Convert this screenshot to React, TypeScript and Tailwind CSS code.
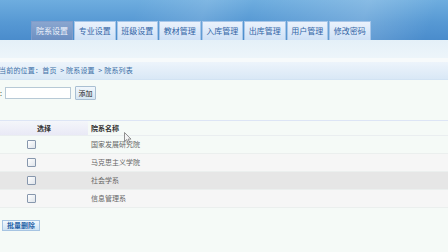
import React from 'react';

const tabs = ['院系设置', '专业设置', '班级设置', '教材管理', '入库管理', '出库管理', '用户管理', '修改密码'];

const rows = [
  { name: '国家发展研究院', bg: 'bg-[#f5faf7]' },
  { name: '马克思主义学院', bg: 'bg-[#f6f6f6]' },
  { name: '社会学系', bg: 'bg-[#e6e6e6]' },
  { name: '信息管理系', bg: 'bg-[#f6f6f6]' },
];

// Little checkbox like the old IE/XP style
const Check = () => (
  <div className="w-[9px] h-[9px] border border-[#8797ad] rounded-[1px] bg-gradient-to-br from-[#ffffff] to-[#dfe4ea]" />
);

export default function App() {
  return (
    <div className="relative w-[448px] h-[252px] overflow-hidden bg-[#f5faf7] font-['Noto_Sans_CJK_SC','Noto_Sans',sans-serif] text-[7px] leading-none">
      {/* --- HEADER --- */}
      <div className="relative h-[40px] overflow-hidden bg-[linear-gradient(180deg,#6eaddf_0%,#5799d4_55%,#4a8ccc_100%)]">
        <div className="absolute inset-0 bg-[linear-gradient(110deg,transparent_30%,rgba(255,255,255,0.12)_45%,transparent_55%,rgba(255,255,255,0.18)_80%,transparent_95%)]" />
        <div className="relative flex items-end h-full pl-[31px] gap-px">
          {tabs.map((t, i) => (
            <div
              key={t}
              className={
                i === 0
                  ? 'w-[42px] h-[19px] flex items-center justify-center text-[8px] text-[#eef3fb] bg-gradient-to-b from-[#8aa6cf] to-[#6c8fc2] border border-b-0 border-[#7f9ccb]'
                  : 'w-[41.5px] h-[19px] flex items-center justify-center text-[8px] text-[#3265a6] bg-gradient-to-b from-[#eaf2fc] to-[#cfe1f6] border border-b-0 border-[#a7c6e9]'
              }
            >
              {t}
            </div>
          ))}
        </div>
      </div>

      {/* --- SUB BANDS --- */}
      <div className="h-[18px] bg-gradient-to-b from-[#e4f0f8] to-[#edf5fa]" />
      <div className="h-[4px] bg-[#f7fafb]" />
      <div className="h-[18px] flex items-center bg-gradient-to-b from-[#edf4fb] to-[#d9e8f6] border-b border-[#d2e3f3] text-[#3c6fa7]">
        <span className="-ml-[1px] tracking-[0.2px]">当前的位置：首页&nbsp;&nbsp;&gt; 院系设置&nbsp;&nbsp;&gt; 院系列表</span>
      </div>

      {/* --- ADD FORM --- */}
      <div className="flex items-center mt-[6px] h-[14px]">
        <span className="text-[#333]">:</span>
        <div className="ml-[3px] w-[66px] h-[12px] bg-white border border-[#b7c9d6]" />
        <button className="ml-[4px] w-[21px] h-[14px] flex items-center justify-center text-[#222] bg-gradient-to-b from-[#f1f7fc] to-[#d6e6f3] border border-[#a9bfd2] rounded-[1px]">
          添加
        </button>
      </div>

      {/* --- TABLE --- */}
      <div className="mt-[20px] border-t border-[#dde5f5]">
        <div className="flex h-[15px] items-center border-b border-[#eaeef0] font-bold text-[#333]">
          <div className="w-[88px] h-full flex items-center justify-center bg-gradient-to-b from-[#f4f6fa] to-[#e9e9f6]">选择</div>
          <div className="pl-[3px]">院系名称</div>
        </div>
        {rows.map((r) => (
          <div key={r.name} className={`flex h-[18px] items-center border-b border-[#ebefee] text-[#666] ${r.bg}`}>
            <div className="w-[62px] flex justify-center">
              <Check />
            </div>
            <div className="pl-[29px]">{r.name}</div>
          </div>
        ))}
      </div>

      <div className="mt-[12px] pl-[2px]">
        <button className="w-[38px] h-[11px] flex items-center justify-center text-[#2a64a8] font-bold bg-gradient-to-b from-[#f2f8fd] to-[#cfe3f4] border border-[#a6c4e2]">
          批量删除
        </button>
      </div>

      {/* mouse pointer caught in the screenshot */}
      <svg className="absolute left-[124px] top-[132px]" width="8" height="12" viewBox="0 0 8 12">
        <path d="M0.5 0.5 L0.5 9.5 L2.6 7.6 L4.2 11.2 L5.6 10.6 L4.1 7.1 L7 7.1 Z" fill="#f4f4f4" stroke="#777" strokeWidth="0.8" />
      </svg>
    </div>
  );
}
